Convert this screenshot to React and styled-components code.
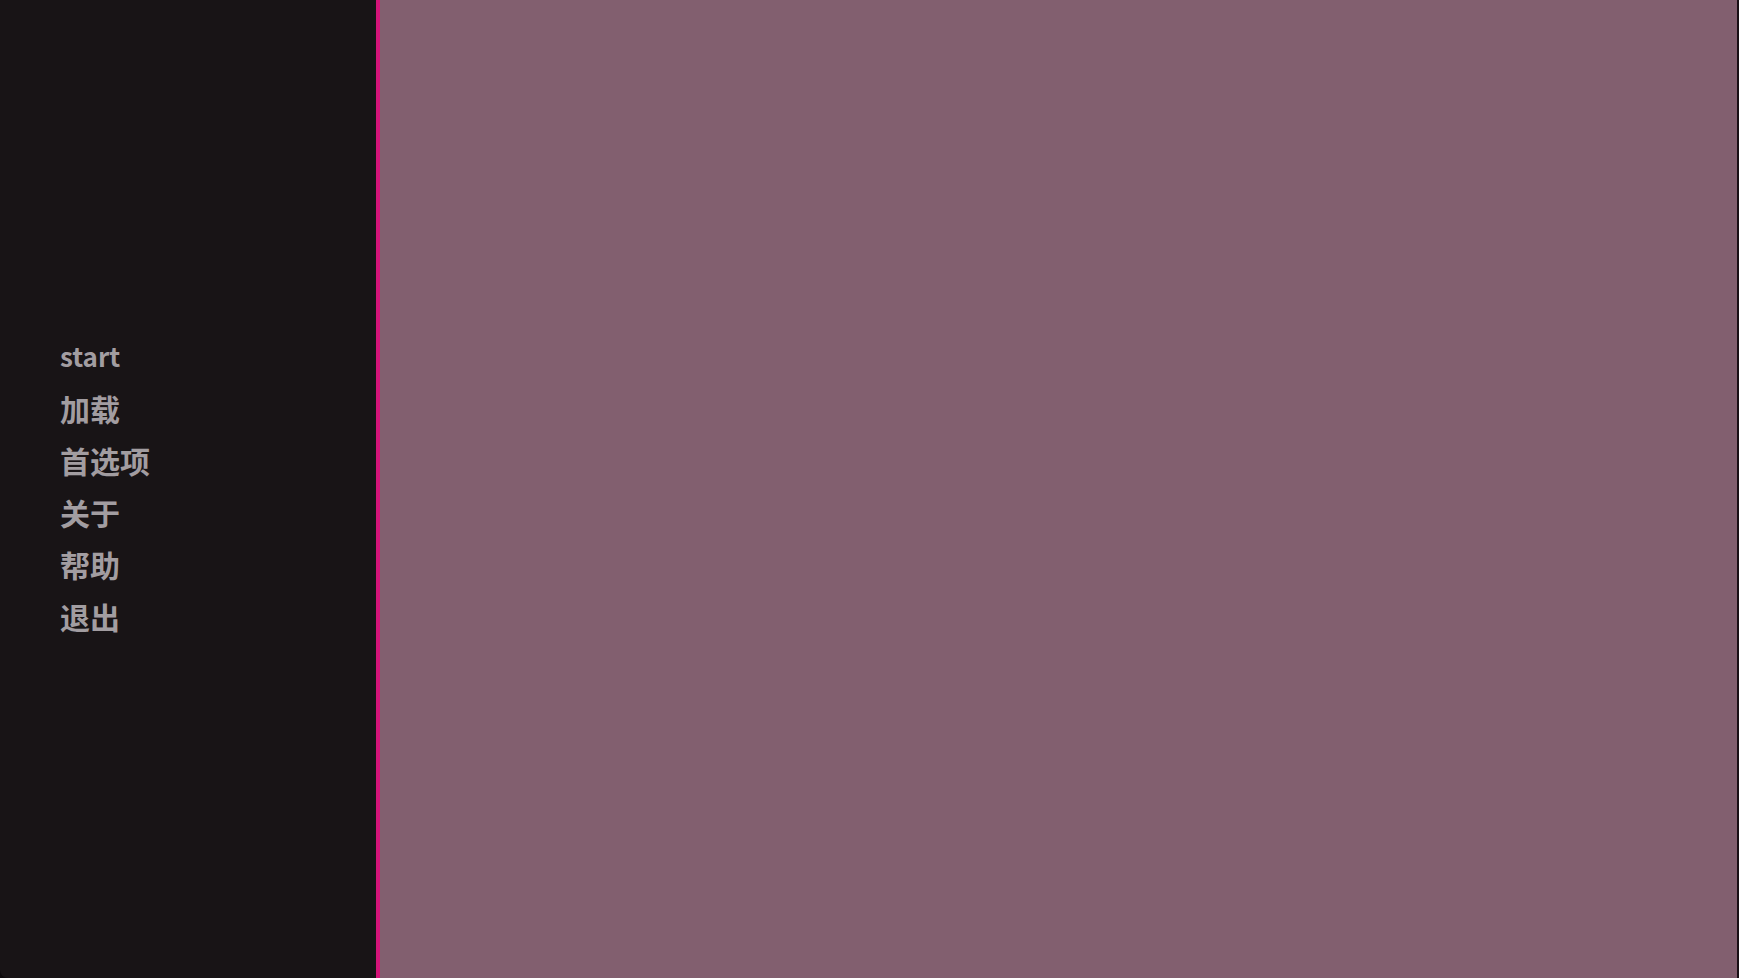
import * as React from "react";
import styled, { createGlobalStyle } from "styled-components";

const GlobalStyle = createGlobalStyle`
  html, body {
    margin: 0;
    padding: 0;
    height: 100%;
    background: #0e0b0d;
  }
  #root {
    height: 100%;
  }
`;

const Shell = styled.div`
  display: flex;
  width: 100vw;
  height: 100vh;
  overflow: hidden;
  border-radius: 0 0 0 8px;
`;

const Sidebar = styled.nav`
  width: 380px;
  flex-shrink: 0;
  background: #181416;
  border-right: 4px solid #d41479;
  display: flex;
  flex-direction: column;
  justify-content: center;
  padding: 0 0 6px 60px;
  box-sizing: border-box;
`;

const Menu = styled.ul`
  list-style: none;
  margin: 0;
  padding: 0;
  display: flex;
  flex-direction: column;
  gap: 12px;
`;

const MenuItem = styled.li`
  font-family: "Noto Sans CJK SC", "Noto Sans", sans-serif;
  font-size: ${(p) => (p.$latin ? "26px" : "30px")};
  font-weight: 700;
  line-height: 40px;
  color: #a29da1;
  cursor: pointer;

  &:hover {
    color: #d8d2d6;
  }
`;

const Stage = styled.main`
  flex: 1;
  background: #825f6f;
  border-right: 2px solid #1a1016;
`;

const items = ["start", "加载", "首选项", "关于", "帮助", "退出"];

export default function App() {
  return (
    <>
      <GlobalStyle />
      <Shell>
        <Sidebar>
          <Menu>
            {items.map((label) => (
              <MenuItem key={label} $latin={/^[a-z]+$/i.test(label)}>
                {label}
              </MenuItem>
            ))}
          </Menu>
        </Sidebar>
        <Stage />
      </Shell>
    </>
  );
}
